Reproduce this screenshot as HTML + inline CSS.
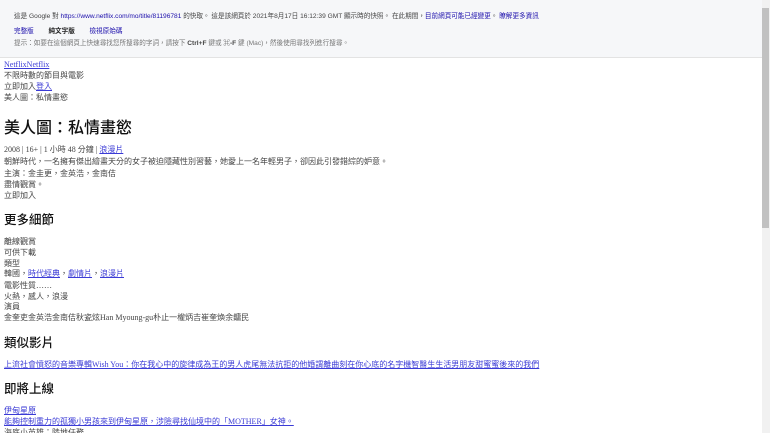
<!DOCTYPE html>
<html><head><meta charset="utf-8"><style>
*{margin:0;padding:0}
html,body{width:770px;height:433px;overflow:hidden;background:#fff}
body{position:relative;font-family:"Liberation Serif","Noto Sans CJK TC",serif;color:#222}
.hd{position:absolute;left:0;top:0;width:762px;height:57px;background:#f6f7f9;border-bottom:1px solid #e3e3e3}
.s{position:absolute;white-space:nowrap;font-family:"Liberation Sans","Noto Sans CJK TC",sans-serif}
.h7{font-size:6.6px;color:#444}
.b{position:absolute;left:4px;white-space:nowrap;font-size:8px;line-height:10px;color:#444}
a{color:#1a0dab;text-decoration:underline}
.ba{color:#3b3bd6}
.h1{position:absolute;left:4px;font-family:"Liberation Sans","Noto Sans CJK TC",sans-serif;font-size:16px;font-weight:500;color:#111;white-space:nowrap}
.h2{position:absolute;left:4px;font-family:"Liberation Sans","Noto Sans CJK TC",sans-serif;font-size:12.5px;font-weight:500;color:#111;white-space:nowrap}
.sb{position:absolute;left:762px;top:0;width:8px;height:433px;background:#f1f1f1}
.th{position:absolute;left:762px;top:8px;width:7px;height:220px;background:#c1c1c1}
</style></head><body>
<div class="hd"></div>
<div class="s h7" style="left:14px;top:10px">這是 Google 對 <span style="color:#1a0dab">https://www.netflix.com/mo/title/81196781</span> 的快取。 這是該網頁於 2021年8月17日 16:12:39 GMT 顯示時的快照。 在此期間，<span style="color:#1a0dab">目前網頁可能已經變更</span>。 <span style="color:#1a0dab">瞭解更多資訊</span></div>
<div class="s h7" style="left:14px;top:25px"><span style="color:#1a0dab">完整版</span>&nbsp;&nbsp;&nbsp;&nbsp;&nbsp;&nbsp;&nbsp;&nbsp;<b style="color:#222">純文字版</b>&nbsp;&nbsp;&nbsp;&nbsp;&nbsp;&nbsp;&nbsp;&nbsp;<span style="color:#1a0dab">檢視原始碼</span></div>
<div class="s h7" style="left:14px;top:37px;color:#777">提示：如要在這個網頁上快速尋找您所搜尋的字詞，請按下 <b style="color:#444">Ctrl+F</b> 鍵或 <b style="color:#444">⌘-F</b> 鍵 (Mac)，然後使用尋找列進行搜尋。</div>

<div class="b" style="top:60px"><a class="ba">NetflixNetflix</a></div>
<div class="b" style="top:71px">不限時數的節目與電影</div>
<div class="b" style="top:82px">立即加入<a class="ba">登入</a></div>
<div class="b" style="top:93px">美人圖：私情畫慾</div>

<div class="h1" style="top:114px">美人圖：私情畫慾</div>

<div class="b" style="top:145px">2008 | 16+ | 1 小時 48 分鐘 | <a class="ba">浪漫片</a></div>
<div class="b" style="top:157px">朝鮮時代，一名擁有傑出繪畫天分的女子被迫隱藏性別習藝，她愛上一名年輕男子，卻因此引發錯綜的妒意。</div>
<div class="b" style="top:169px">主演：金圭更，金英浩，金南佶</div>
<div class="b" style="top:180px">盡情觀賞。</div>
<div class="b" style="top:191px">立即加入</div>

<div class="h2" style="top:209px">更多細節</div>
<div class="b" style="top:237px">離線觀賞</div>
<div class="b" style="top:248px">可供下載</div>
<div class="b" style="top:259px">類型</div>
<div class="b" style="top:269px">韓國，<a class="ba">時代經典</a>，<a class="ba">劇情片</a>，<a class="ba">浪漫片</a></div>
<div class="b" style="top:281px">電影性質……</div>
<div class="b" style="top:292px">火熱，感人，浪漫</div>
<div class="b" style="top:302px">演員</div>
<div class="b" style="top:313px">金奎吏金英浩金南佶秋瓷炫Han Myoung-gu朴止一權炳吉崔奎煥余鏞民</div>

<div class="h2" style="top:332px">類似影片</div>
<div class="b" style="top:360px"><a class="ba">上流社會憤怒的音樂專輯Wish You：你在我心中的旋律成為王的男人虎尾無法抗拒的他婚謂離曲刻在你心底的名字機智醫生生活男朋友甜蜜蜜後來的我們</a></div>

<div class="h2" style="top:378px">即將上線</div>
<div class="b" style="top:406px"><a class="ba">伊甸星原</a></div>
<div class="b" style="top:417px"><a class="ba">能夠控制重力的孤獨小男孩來到伊甸星原，涉險尋找仙境中的「MOTHER」女神。</a></div>
<div class="b" style="top:428px">海底小英雄：陸地任務</div>

<div class="sb"></div><div class="th"></div>
</body></html>
